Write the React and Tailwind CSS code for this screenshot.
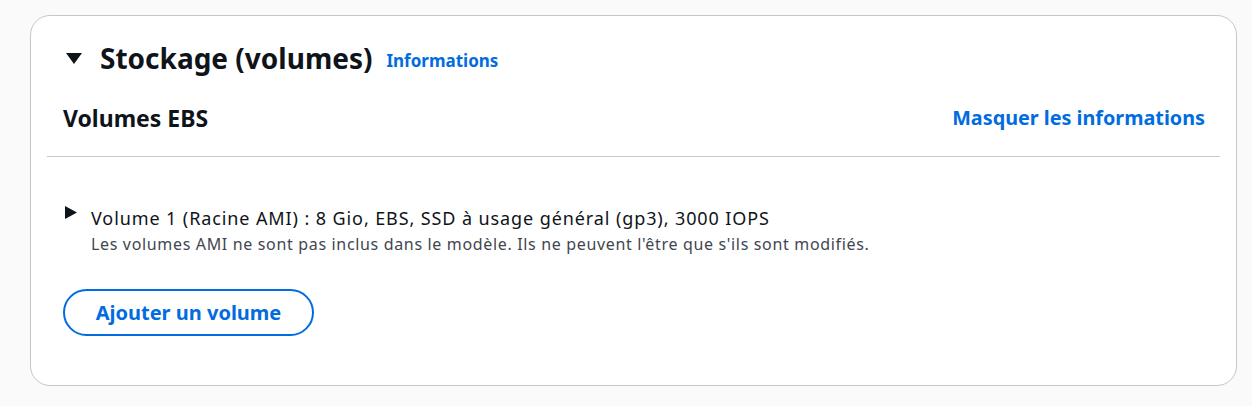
import React from 'react';

const CaretDown = ({ className = '' }) => (
  <svg viewBox="0 0 16 11" className={className} fill="currentColor">
    <polygon points="0,0 16,0 8,11" />
  </svg>
);

const CaretRight = ({ className = '' }) => (
  <svg viewBox="0 0 12 13" className={className} fill="currentColor">
    <polygon points="0,0 12,6.5 0,13" />
  </svg>
);

export default function App() {
  return (
    <div className="min-h-[406px] bg-[#fafafa] pt-[15px] pl-[30px] pr-[15px] pb-[21px] text-[#0f141a]" style={{ fontFamily: '"Noto Sans", "Open Sans", sans-serif' }}>
      <div className="h-[371px] rounded-[20px] border border-[#c6c6cd] bg-white">
        <div className="mx-4 border-b border-[#c6c6cd] px-4 pt-[24px] pb-[26px]">
          <div className="flex items-center">
            <CaretDown className="ml-[3px] h-[11px] w-[16px]" />
            <h2 className="ml-[18px] text-[28px] font-bold leading-[36px]">Stockage (volumes)</h2>
            <a className="ml-[14px] mt-[5px] text-[17px] font-bold leading-5 text-[#006ce0]">Informations</a>
          </div>
          <div className="mt-[30px] flex items-center justify-between">
            <h3 className="text-[23px] font-bold leading-6">Volumes EBS</h3>
            <a className="mr-[-1px] text-[19.8px] font-bold leading-6 text-[#006ce0]">Masquer les informations</a>
          </div>
        </div>
        <div className="px-8 pt-[48px]">
          <div className="flex items-start">
            <CaretRight className="ml-[2px] mt-[1px] h-[13px] w-3" />
            <div className="ml-[14px]">
              <div className="text-[18px] leading-[26px] tracking-[0.9px]">Volume 1 (Racine AMI) : 8 Gio, EBS, SSD à usage général (gp3), 3000 IOPS</div>
              <div className="text-[16px] leading-[26px] tracking-[0.66px] text-[#424650]">Les volumes AMI ne sont pas inclus dans le modèle. Ils ne peuvent l'être que s'ils sont modifiés.</div>
            </div>
          </div>
          <button className="mt-[32px] h-[47px] w-[251px] rounded-full border-2 border-[#006ce0] text-[20px] font-bold text-[#006ce0]">
            Ajouter un volume
          </button>
        </div>
      </div>
    </div>
  );
}
